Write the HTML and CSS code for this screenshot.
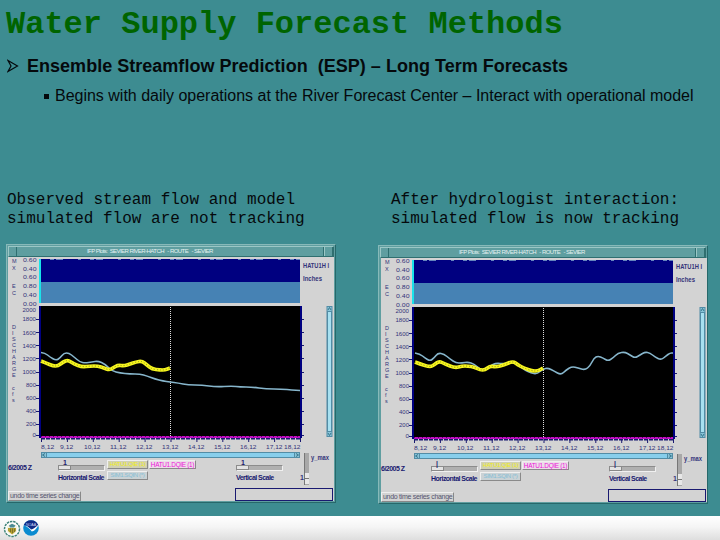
FILE: index.html
```
<!DOCTYPE html>
<html lang="en">
<head>
    <meta charset="UTF-8">
    <meta name="viewport" content="width=device-width, initial-scale=1.0">
    <title>Water Supply Forecast Methods</title>
    <link rel="stylesheet" href="styles.css">
</head>
<body>
    <div class="slide">
        <h1>Water Supply Forecast Methods</h1>
        <h2>
            <svg class="arrow" width="12" height="14" viewBox="0 0 12 14"><path d="M1 1.5 L10.5 7 L1 12.5 L4 7 Z" /></svg>
            <span>Ensemble Streamflow Prediction&nbsp; (ESP) – Long Term Forecasts</span>
        </h2>
        <div class="point"><i class="square"></i><span>Begins with daily operations at the River Forecast Center – Interact with operational model</span></div>

        <div class="compare">
            <div class="side">
                <p>Observed stream flow and model<br>simulated flow are not tracking</p>
                <div class="window">
                    <div class="titlebar"><i class="menu"></i><span>IFP Plots:&nbsp; SEVIER RIVER-HATCH &nbsp; - ROUTE &nbsp; - SEVIER</span><i class="min"></i><i class="max"></i></div>
                    <div class="panel">
                        <svg class="plot" id="before" viewBox="8 257 326 202"></svg>
                        <div class="controls">
                            <div class="date">6/2005 Z</div>
                            <div class="scale"><b>1</b><div class="slider"><i></i></div><span>Horizontal Scale</span></div>
                            <div class="legend">
                                <span class="key yellow">HATU1.QIE (1)</span>
                                <span class="key magenta">HATU1.DQIE (1)</span>
                                <span class="key blue">SIM1.SQIN (*)</span>
                            </div>
                            <div class="scale vertical"><b>1</b><div class="slider"><i></i></div><span>Vertical Scale</span></div>
                        </div>
                        <div class="bottom">
                            <div class="undo">undo time series change</div>
                            <div class="message"></div>
                        </div>
                    </div>
                </div>
            </div>
            <div class="side">
                <p>After hydrologist interaction:<br>simulated flow is now tracking</p>
                <div class="window second">
                    <div class="titlebar"><i class="menu"></i><span>IFP Plots:&nbsp; SEVIER RIVER-HATCH &nbsp; - ROUTE &nbsp; - SEVIER</span><i class="min"></i><i class="max"></i></div>
                    <div class="panel">
                        <svg class="plot" id="after" viewBox="8 257 326 202"></svg>
                        <div class="controls">
                            <div class="date">6/2005 Z</div>
                            <div class="scale"><b>|</b><div class="slider"><i></i></div><span>Horizontal Scale</span></div>
                            <div class="legend">
                                <span class="key yellow">HATU1.QIE (1)</span>
                                <span class="key magenta">HATU1.DQIE (1)</span>
                                <span class="key blue">SIM1.SQIN (*)</span>
                            </div>
                            <div class="scale vertical"><b>|</b><div class="slider"><i></i></div><span>Vertical Scale</span></div>
                        </div>
                        <div class="bottom">
                            <div class="undo">undo time series change</div>
                            <div class="message"></div>
                        </div>
                    </div>
                </div>
            </div>
        </div>
    </div>
    <div class="footer">
        <svg width="18" height="18" viewBox="0 0 18 18">
            <circle cx="9" cy="9" r="8.2" fill="#fff" />
            <circle cx="9" cy="9" r="7.5" fill="none" stroke="#3f8379" stroke-width="1.5" stroke-dasharray="2.5 .8" />
            <circle cx="9" cy="9" r="5.6" fill="#f3f3e4" />
            <path d="M5 8 H13 V11 L9.2 14.5 L5 11 Z" fill="#b5a02f" />
            <path d="M6 5.5 L9 3.8 L12.5 5.5 L11 7.5 H7 Z" fill="#4b8a94" />
            <path d="M7.5 8.5 V12 M9.5 8.5 V13 M11.5 8.5 V12" stroke="#65602a" stroke-width=".7" />
        </svg>
        <svg width="16" height="16" viewBox="0 0 16 16">
            <circle cx="8" cy="8" r="7.8" fill="#0b8bd0" />
            <path d="M.8 5 A7.8 7.8 0 0 1 15.2 5 Q13 9 8.5 10 Q6 6.5 .8 5" fill="#102a86" />
            <path d="M.3 5 Q5 6 8.3 9.4 Q11 8.8 15.5 4.4 Q13.5 10 8.8 11.6 Q6 7.3 .3 5" fill="#fff" />
            <text x="8" y="5.6" font-size="3.6" text-anchor="middle" fill="#cbd7f4">NOAA</text>
        </svg>
    </div>
    <script src="plots.js"></script>
</body>
</html>
```
FILE: styles.css
```
body {
    margin: 0;
    width: 720px;
    height: 540px;
    overflow: hidden;
    display: flex;
    flex-direction: column;
    background: #3d8c91;
    color: #05090c;
    font-family: "Liberation Sans", Arial, sans-serif;
}
h1, h2, p {
    margin: 0;
}
.slide {
    height: 516px;
}
h1 {
    padding: 6px 0 0 6px;
    height: 37px;
    line-height: 38px;
    font-family: "Liberation Mono", "Courier New", monospace;
    font-size: 32px;
    color: #006400;
    white-space: nowrap;
}
h2 {
    display: flex;
    align-items: center;
    gap: 8px;
    padding: 12px 0 0 7px;
    height: 22px;
    font-size: 18px;
    letter-spacing: 0.02px;
    white-space: nowrap;
}
.arrow path {
    fill: none;
    stroke: #05090c;
    stroke-width: 1.2;
}
.point {
    display: flex;
    align-items: center;
    gap: 6px;
    padding: 9px 0 0 44px;
    height: 20px;
    font-size: 16px;
    letter-spacing: -0.01px;
    white-space: nowrap;
}
.square {
    width: 5px;
    height: 5px;
    background: #05090c;
}
.compare {
    display: grid;
    grid-template-columns: 372px 330px;
    padding: 84px 0 0 6px;
}
.side p {
    height: 38px;
    padding: 1px 0 0 1px;
    font-family: "Liberation Mono", "Courier New", monospace;
    font-size: 16px;
    line-height: 19px;
    white-space: nowrap;
}
.side:nth-child(2) p {
    padding-left: 13px;
}

/* plot window */
.window {
    box-sizing: border-box;
    width: 330px;
    height: 259px;
    margin-top: 15px;
    border: 1px solid #87b9b9;
    border-right-color: #26686a;
    border-bottom-color: #26686a;
    padding: 1px;
    background: #5f9ea0;
}
.window.second {
    margin-top: 16px;
}
.second .panel {
    margin-left: 1px;
}
.titlebar {
    display: flex;
    box-sizing: border-box;
    width: 326px;
    height: 11px;
    border: 1px solid #9bc7c6;
    border-right-color: #2f6f70;
    border-bottom-color: #2f6f70;
    font-size: 6px;
    line-height: 9px;
    color: #e4f2f1;
}
.titlebar span {
    flex: 1;
    padding-left: 70px;
    white-space: nowrap;
    letter-spacing: -0.55px;
}
.titlebar i {
    width: 7px;
    border-right: 1px solid #2f6f70;
}
.titlebar .max {
    border-left: 1px solid #9bc7c6;
}
.panel {
    width: 326px;
    height: 244px;
    background: #d3d3d3;
    color: #191970;
}
.plot {
    display: block;
    width: 326px;
    height: 202px;
    overflow: visible;
}
.plot text {
    fill: #33337a;
}
.controls {
    display: flex;
    height: 22px;
    font-size: 7px;
    white-space: nowrap;
}
.date {
    width: 50px;
    padding-top: 5px;
    font-weight: bold;
    letter-spacing: -0.5px;
}
.scale {
    width: 46px;
    line-height: 7px;
    font-weight: bold;
    letter-spacing: -0.53px;
}
.scale b {
    display: block;
    height: 6px;
    padding-left: 5px;
}
.slider {
    height: 4px;
    margin-bottom: 3px;
    border: 1px solid #8c8c8c;
    border-right-color: #f0f0f0;
    border-bottom-color: #f0f0f0;
    background: #b0b0b0;
}
.scale .slider {
    width: 45px;
}
.vertical {
    margin-left: 3px;
}
.slider i {
    display: block;
    box-sizing: border-box;
    width: 12px;
    height: 4px;
    border-bottom: 1px solid #888;
    border-right: 1px solid #888;
    background: #e3e3e3;
}
.legend {
    display: grid;
    grid-template-columns: 41px 47px;
    grid-template-rows: 9px 9px;
    gap: 2px 1px;
    width: 129px;
    padding: 1px 0 0 3px;
    box-sizing: border-box;
}
.key {
    box-sizing: border-box;
    border: 1px solid #efefef;
    border-right-color: #8a8a8a;
    border-bottom-color: #8a8a8a;
    line-height: 7px;
    font-size: 6px;
    letter-spacing: -0.35px;
    text-align: center;
    white-space: nowrap;
}
.yellow {
    color: #f0ee19;
    background: #d0d0b4;
}
.magenta {
    color: #ed14d9;
    background: #ecdde9;
    font-size: 6.4px;
    letter-spacing: -0.3px;
}
.blue {
    color: #83bed6;
    background: #cad2d5;
}
.bottom {
    display: flex;
    justify-content: space-between;
    align-items: flex-end;
    height: 20px;
}
.undo {
    box-sizing: border-box;
    width: 73px;
    height: 10px;
    padding-left: 1px;
    border: 1px solid #eee;
    border-right-color: #888;
    border-bottom-color: #888;
    font-size: 7px;
    line-height: 7px;
    letter-spacing: -0.3px;
    white-space: nowrap;
    color: #55556f;
}
.message {
    box-sizing: border-box;
    width: 98px;
    height: 13px;
    margin-right: 1px;
    border: 1px solid #191970;
}

.footer {
    display: flex;
    gap: 2px;
    height: 24px;
    box-sizing: border-box;
    padding: 4px 0 0 3px;
    background: linear-gradient(#fff, #f5f5f5 45%, #dedede);
}
```
FILE: plots.js
```
// traces are in plot coordinates, x 41 - 300 is the time axis
const observedBefore = '41,361 46,363 53,366 58,366 63,362 68,360 74,364 82,367 90,366 98,366 104,368 109,370 113,368 118,365 124,366 130,364 136,362 142,361 147,365 152,369 160,370 165,370 170,368';
const simulatedBefore = '41,352.5 45,353 50,357 56,360.5 60,358 64,353 69,353 74,357 80,362 85,363 92,362 98,361 105,364 112,371 120,373 130,374 140,374 147,376 155,379 163,381 170,382 178,383 188,385 202,385 216,387 232,386 240,387 252,387 266,389 282,389 292,390 300,390.5';
const observedAfter = '42,361 47,363 57,366 61,364 66,360 72,363 82,367 89,365 95,365 101,366 107,369 112,369 117,365 123,366 131,364 140,360 145,364 151,367 159,370 165,370 170,367';
const simulatedAfter = '42,352 47,353 52,357 57,360 61,357 65,352 71,353 77,358 83,362 89,362 95,361 101,363 107,368 112,369 117,365 123,362 131,363 140,361 145,364 152,369 158,372 164,373 170,368 175,367 181,370 188,374 193,369 199,365.5 205,367 212,369 217,365 221,357 225,355 230,357 235,360 240,357 245,352 252,351 257,354 262,357 267,354 272,351 277,352 282,356 288,359 293,355 297,352 300,352';

function rect(x, y, w, h, fill) {
    return `<rect x="${x}" y="${y}" width="${w}" height="${h}" fill="${fill}"/>`;
}

function text(x, y, size, str, width) {
    const fit = width ? `textLength="${width}" lengthAdjust="spacingAndGlyphs"` : '';
    return `<text x="${x}" y="${y}" font-size="${size}" ${fit}>${str}</text>`;
}

// smooth line through the midpoints of the trace
function curve(points) {
    const p = points.split(' ').map(a => a.split(',').map(Number));
    let d = `M${p[0]}`;
    for (let i = 1; i < p.length - 1; i++) {
        d += ` Q${p[i]} ${(p[i][0] + p[i + 1][0]) / 2},${(p[i][1] + p[i + 1][1]) / 2}`;
    }
    return d + ` L${p[p.length - 1]}`;
}

function drawPlot(id, observed, simulated) {
    let s = '';

    // precipitation
    s += rect(39, 259, 261, 23, '#000080') + rect(39, 282, 261, 21, '#4682b4');
    s += rect(39, 259, 2, 44, '#19e3ea');
    s += '<path d="M50 259.5 H300" stroke="#6584bd" stroke-dasharray="4 2 7 15 3 9"/>';
    ['0.60', '0.40', '0.60', '0.80', '0.40', '0.00'].forEach((t, i) => {
        s += text(23, 262 + i * 8.7, 6, t, 13.5);
    });

    // discharge
    s += rect(39, 306, 263, 131, '#000');
    s += rect(39, 306, 2, 132, '#000080') + rect(300, 306, 2, 132, '#000080');
    const rows = [2000, 1800, 1600, 1400, 1200, 1000, 800, 600, 400, 200, 0];
    rows.forEach((v, i) => {
        const y = i == 0 ? 309.5 : i == 10 ? 435 : 306 + i * 13.1;
        const w = v >= 1000 ? 13.5 : v > 0 ? 10 : 3.5;
        s += text(36 - w, y + 2.3, 6.2, v, w);
        if (i) s += rect(36, Math.round(y), 3, 1, '#191970') + rect(302, Math.round(y), 2, 1, '#191970');
    });
    s += '<path d="M170.5 307 V436" stroke="#ddd" stroke-dasharray="1 1"/>';
    s += `<path d="${curve(simulated)}" fill="none" stroke="#87b6cc" stroke-width="1.6"/>`;
    s += `<path d="${curve(observed)}" fill="none" stroke="#f5f51e" stroke-width="3.6"/>`;
    s += `<path d="${curve(observed)}" fill="none" stroke="#8c8a16" stroke-width="1" stroke-dasharray="1 2"/>`;
    s += rect(41, 436, 259, 2, '#c010c0');
    s += '<path d="M41 436.5 H300" stroke="#600070" stroke-dasharray="1 3"/>';

    // time axis
    s += '<path d="M41 438.7 H300" stroke="#191970" stroke-width="1.6" stroke-dasharray="4 1"/>';
    for (let d = 0; d <= 10; d++) {
        s += rect(41 + d * 25.9, 438, 1, 4, '#191970');
    }
    const days = [[41, '8,12'], [60, '9,12'], [84, '10,12'], [110, '11,12'], [136, '12,12'], [162, '13,12'], [188, '14,12'], [214, '15,12'], [240, '16,12'], [266, '17,12'], [284, '18,12']];
    days.forEach(([x, t]) => {
        s += text(x, 448.5, 6, t, t.length * 3.3);
    });

    // scroll bars
    s += rect(41, 452, 259, 6, '#528ca5') + rect(47, 453, 247, 4, '#87ceeb') + rect(42, 453, 4, 4, '#87c3d7') + rect(295, 453, 4, 4, '#87c3d7');
    s += '<path d="M45 453.5 L42.5 455 L45 456.5 M296 453.5 L298.5 455 L296 456.5" fill="none" stroke="#39778e"/>';
    s += rect(326.5, 306, 6, 131, '#528ca5') + rect(328, 312, 3, 119, '#a7e0f0') + rect(327.5, 307, 4, 4, '#87c3d7') + rect(327.5, 432, 4, 4, '#87c3d7');
    s += '<path d="M328 310 L329.5 307.5 L331 310 M328 433 L329.5 435.5 L331 433" fill="none" stroke="#39778e"/>';

    // side labels
    s += text(12, 262.5, 5.5, 'M') + text(12, 270, 5.5, 'X') + text(12, 288, 5.5, 'E') + text(12, 295, 5.5, 'C');
    'DISCHARGE'.split('').forEach((c, i) => {
        s += text(12, 329 + i * 6, 5.5, c);
    });
    s += text(12, 390, 5.5, 'c') + text(12, 396, 5.5, 'f') + text(12, 402, 5.5, 's');
    s += `<g font-weight="bold">${text(303, 268, 7, 'HATU1H I', 26)}${text(303, 281, 7, 'Inches', 19)}</g>`;

    // y_max slider hangs below the plot
    s += rect(304, 453, 5, 32, '#a8a8a8') + rect(304, 453, 1, 32, '#777') + rect(305, 473, 4, 11, '#e8e8e8') + rect(305, 478, 4, 1, '#777');
    s += `<g font-weight="bold">${text(311, 459.5, 7, 'y_max', 18)}${text(300, 480, 7, '1')}</g>`;

    document.getElementById(id).innerHTML = s;
}

drawPlot('before', observedBefore, simulatedBefore);
drawPlot('after', observedAfter, simulatedAfter);
```
